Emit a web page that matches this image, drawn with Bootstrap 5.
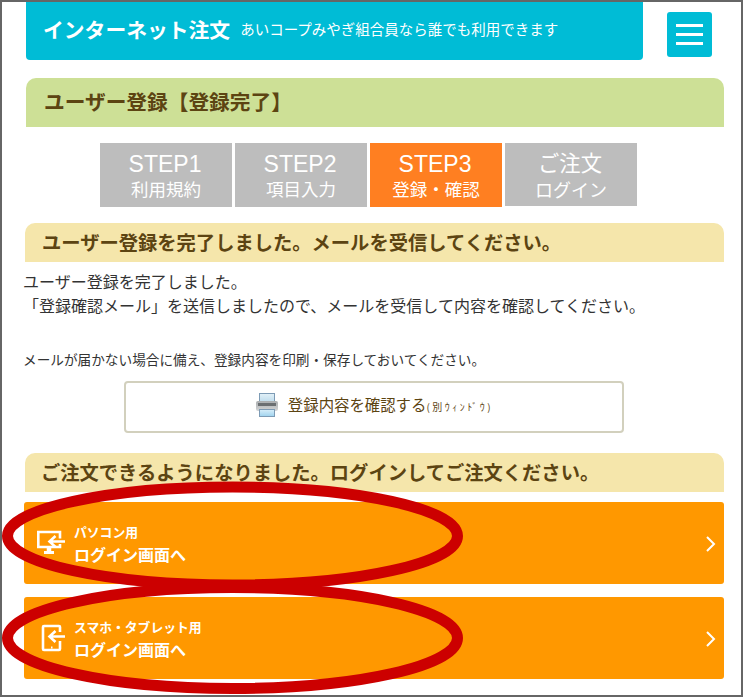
<!DOCTYPE html>
<html lang="ja">
<head>
  <meta charset="UTF-8" />
  <meta name="viewport" content="width=device-width, initial-scale=1.0"/>
  <title>ユーザー登録完了</title>
  <link href="https://cdn.jsdelivr.net/npm/bootstrap@5.3.3/dist/css/bootstrap.min.css" rel="stylesheet">
  <style>
    body { font-family: "Noto Sans CJK JP", "Liberation Sans", sans-serif; color: #333; background: #fff; }
    .page-frame { width: 743px; height: 697px; padding: 2px 19px 0 24px; box-shadow: inset 0 0 0 2px #666; overflow: hidden; }

    .top-bar { margin-left: 2px; margin-right: 12px; }
    .site-head { width: 617px; height: 58px; padding: 0 0 4px 17px; background: #00bcd6; color: #fff; border-radius: 0 0 4px 4px; }
    .site-name { font-size: 20.8px; font-weight: 700; line-height: 1; }
    .site-note { font-size: 14.5px; line-height: 1; margin-left: 10px; }
    .menu-btn { width: 45px; height: 45px; margin-top: 10px; background: #00bcd6; border: 0; border-radius: 3px; padding: 12px 9px; }
    .menu-btn span { height: 3px; background: #fff; }

    .page-title { margin-left: 2px; height: 49px; margin-top: 18px; padding: 0 0 2px 18px; background: #cde096; color: #5c4412; font-size: 20.7px; font-weight: 700; border-radius: 10px 10px 0 0; }

    .step-row { margin-top: 16px; margin-left: 76px; gap: 3px; }
    .step-box { width: 132px; height: 64px; background: #bdbdbd; color: #fff; text-align: center; }
    .step-box.now { background: #ff7f21; }
    .step-box.last { height: 63px; }
    .step-top { font-family: "Liberation Sans", "Noto Sans CJK JP", sans-serif; font-size: 23px; line-height: 28px; padding-top: 7px; margin-left: -2px; }
    .step-box.last .step-top { font-family: "Noto Sans CJK JP", sans-serif; font-size: 21.3px; line-height: 28px; padding-top: 5px; margin-bottom: 2px; }
    .step-sub { font-size: 17.5px; line-height: 22px; }
    .step-box.last .step-sub { font-size: 18px; }

    .sub-title { margin-left: 1px; height: 39px; padding-left: 17px; background: #f5e6ab; color: #5c4412; font-size: 19.3px; font-weight: 700; border-radius: 10px 10px 0 0; }
    .done-title { margin-top: 16px; }
    .login-title { margin-top: 20px; padding-left: 16px; }

    .done-text { margin: 7px 0 0 -1px; font-size: 16px; line-height: 24px; }
    .mail-note { margin: 32px 0 0 -1px; font-size: 13.65px; line-height: 20px; }

    .print-btn { width: 500px; height: 52px; margin: 12px 0 0 100px; padding: 0 0 4px; background: #fff; border: 2px solid #d2d0bd; border-radius: 4px; color: #5c4412; font-size: 15.4px; text-decoration: none; }
    .print-btn:hover { color: #5c4412; }
    .print-pic { margin-right: 9px; }
    .print-win { font-size: 10px; letter-spacing: 2.5px; }

    .login-link { height: 82px; padding: 0 7px 0 13px; background: #ff9800; color: #fff; border-radius: 3px; text-decoration: none; width: 700px; }
    .login-link:hover { color: #fff; }
    .login-pc { margin-top: 10px; }
    .login-sp { margin-top: 13px; }
    .login-icon { width: 30px; height: 30px; margin-right: 7px; flex: none; }
    .login-for { font-size: 12.8px; font-weight: 700; line-height: 20px; padding-top: 1px; }
    .login-main { font-size: 16px; font-weight: 700; line-height: 24px; }
    .login-arrow { margin-top: 2px; }

    .mark-ring { position: absolute; left: 0; top: 0; pointer-events: none; }
  </style>
</head>
<body class="m-0">

  <div class="page-frame position-relative">

    <!-- header -->
    <div class="top-bar d-flex justify-content-between align-items-start">
      <div class="site-head d-flex align-items-center">
        <span class="site-name">インターネット注文</span>
        <span class="site-note">あいコープみやぎ組合員なら誰でも利用できます</span>
      </div>
      <button class="menu-btn d-flex flex-column justify-content-between" type="button" aria-label="メニュー">
        <span class="w-100 d-block"></span>
        <span class="w-100 d-block"></span>
        <span class="w-100 d-block"></span>
      </button>
    </div>

    <h1 class="page-title d-flex align-items-center mb-0">ユーザー登録【登録完了】</h1>

    <!-- steps -->
    <div class="step-row d-flex align-items-start">
      <div class="step-box"><div class="step-top">STEP1</div><div class="step-sub">利用規約</div></div>
      <div class="step-box"><div class="step-top">STEP2</div><div class="step-sub">項目入力</div></div>
      <div class="step-box now"><div class="step-top">STEP3</div><div class="step-sub">登録・確認</div></div>
      <div class="step-box last"><div class="step-top">ご注文</div><div class="step-sub">ログイン</div></div>
    </div>

    <h2 class="sub-title done-title d-flex align-items-center mb-0">ユーザー登録を完了しました。メールを受信してください。</h2>
    <p class="done-text">ユーザー登録を完了しました。<br>「登録確認メール」を送信しましたので、メールを受信して内容を確認してください。</p>
    <p class="mail-note">メールが届かない場合に備え、登録内容を印刷・保存しておいてください。</p>

    <a class="print-btn d-flex align-items-center justify-content-center" href="#">
      <svg class="print-pic" width="24" height="24" viewBox="0 0 24 24">
        <defs>
          <linearGradient id="paperTop" x1="0" y1="0" x2="0" y2="1"><stop offset="0" stop-color="#e3f1f8"/><stop offset="1" stop-color="#b7d8ea"/></linearGradient>
          <linearGradient id="paperLow" x1="0" y1="0" x2="0" y2="1"><stop offset="0" stop-color="#d8eef9"/><stop offset="1" stop-color="#9fd3ee"/></linearGradient>
          <linearGradient id="printBody" x1="0" y1="0" x2="0" y2="1"><stop offset="0" stop-color="#a9acae"/><stop offset="1" stop-color="#d3d5d6"/></linearGradient>
        </defs>
        <rect x="4.500" y="0.500" width="15" height="10" fill="url(#paperTop)" stroke="#7d9bb5"/>
        <rect x="1" y="8" width="22" height="10" rx="2" fill="url(#printBody)"/>
        <rect x="3" y="10" width="18" height="3" fill="#6b6f72"/>
        <rect x="4.500" y="16.500" width="15" height="7" fill="url(#paperLow)" stroke="#7d9bb5"/>
      </svg>
      <span>登録内容を確認する<span class="print-win">(別ｳｨﾝﾄﾞｳ)</span></span>
    </a>

    <h2 class="sub-title login-title d-flex align-items-center mb-0">ご注文できるようになりました。ログインしてご注文ください。</h2>

    <!-- login links -->
    <a class="login-link login-pc d-flex align-items-center" href="#">
      <svg class="login-icon" viewBox="0 0 30 30" fill="none" stroke="#fff" stroke-width="2.600">
        <path d="M23 10.500V4H1.300v15h21.700v-3"/>
        <path d="M7 24.500h10" stroke-width="3"/>
        <path d="M12 19v5" stroke-width="4.500"/>
        <path d="M28 13.500H13M18.500 8l-6 5.500 6 5.500" stroke-width="2.600"/>
      </svg>
      <div class="flex-grow-1">
        <div class="login-for">パソコン用</div>
        <div class="login-main">ログイン画面へ</div>
      </div>
      <svg class="login-arrow" width="12" height="18" viewBox="0 0 12 18" fill="none" stroke="#fff" stroke-width="2"><path d="M2 2l7 7-7 7"/></svg>
    </a>
    <a class="login-link login-sp d-flex align-items-center" href="#">
      <svg class="login-icon" viewBox="0 0 30 30" fill="none" stroke="#fff" stroke-width="2.600">
        <path d="M23 9V4a1 1 0 0 0-1-1H7a1 1 0 0 0-1 1v22a1 1 0 0 0 1 1h15a1 1 0 0 0 1-1v-8"/>
        <path d="M14 24.500h1.500" stroke-width="2"/>
        <path d="M28 13.500H13M18.500 8l-6 5.500 6 5.500"/>
      </svg>
      <div class="flex-grow-1">
        <div class="login-for">スマホ・タブレット用</div>
        <div class="login-main">ログイン画面へ</div>
      </div>
      <svg class="login-arrow" width="12" height="18" viewBox="0 0 12 18" fill="none" stroke="#fff" stroke-width="2"><path d="M2 2l7 7-7 7"/></svg>
    </a>

    <!-- red marks drawn over the two links -->
    <svg class="mark-ring" width="743" height="697" viewBox="0 0 743 697" fill="none" stroke="#cc0000" stroke-width="11">
      <ellipse cx="232.500" cy="536" rx="225" ry="49"/>
      <ellipse cx="232.500" cy="638" rx="225" ry="50.500"/>
    </svg>
  </div>

</body>
</html>
